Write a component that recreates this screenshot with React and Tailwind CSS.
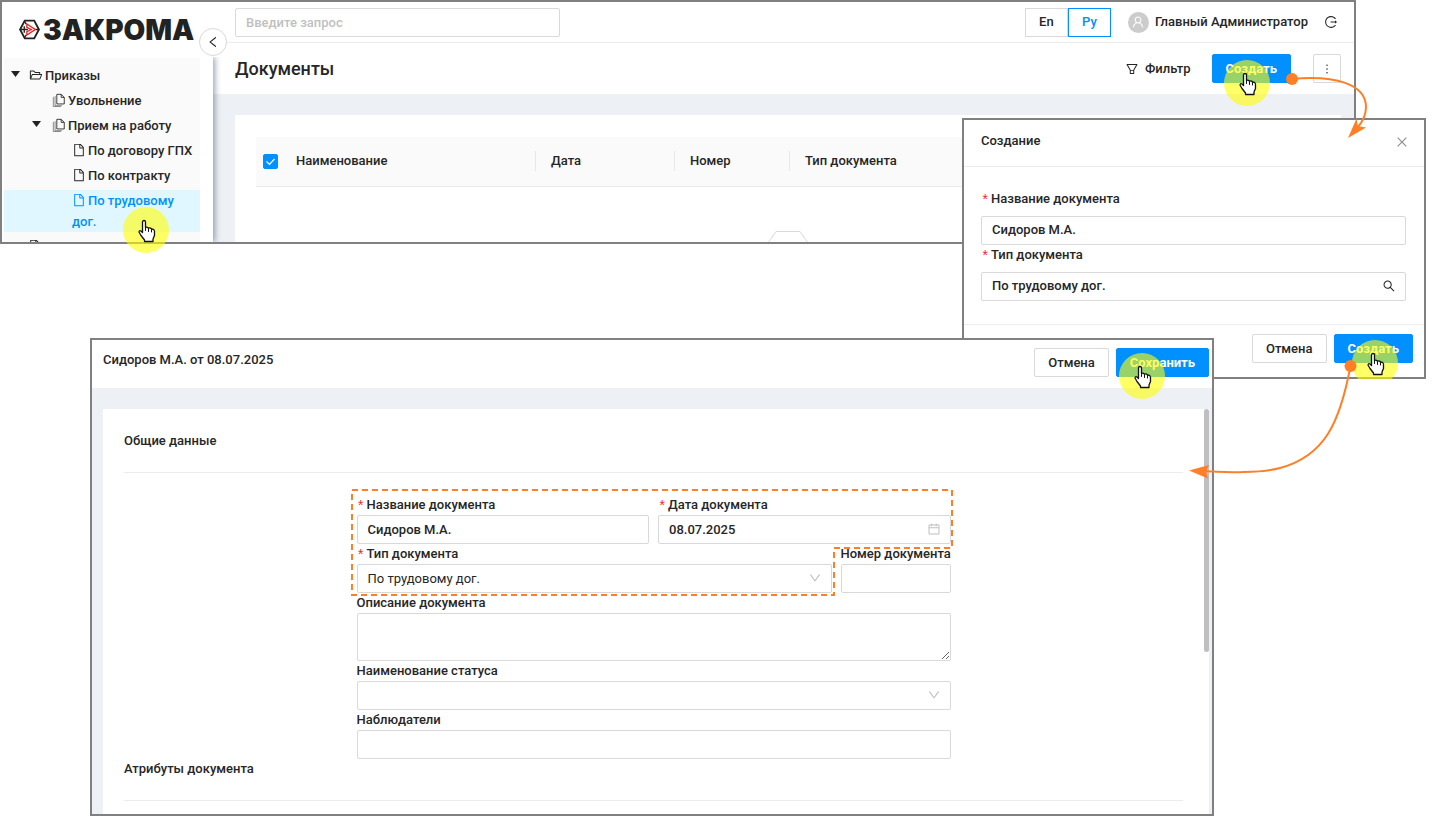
import { useState } from "react"
import {
  AiOutlineCalendar,
  AiOutlineClose,
  AiOutlineDown,
  AiOutlineFile,
  AiOutlineFilter,
  AiOutlineFolderOpen,
  AiOutlineLeft,
  AiOutlineLogout,
  AiOutlineMore,
  AiOutlineSearch,
  AiOutlineUser,
} from "react-icons/ai"
import clsx from "clsx"

const fieldClass =
  "block w-full h-[29px] px-[10px] bg-white border border-[#d9d9d9] rounded-xs placeholder-[#bfbfbf] focus:outline-none focus:border-[#0090ff]"

// stacked sheets, the front one with a folded corner
const CopiesIcon = ({ className }) => (
  <svg viewBox="0 0 14 16" fill="none" stroke="currentColor" className={className}>
    <path d="M4.500 1.500h5l3.500 3.500v7.500H4.500zM9.500 1.500V5H13" />
    <path d="M2.500 3.500v11H10.500M.5 4.500v11H9" strokeOpacity="0.6" />
  </svg>
)

const LogoMark = () => (
  <svg viewBox="0 0 20 20" fill="none" className="w-[21px] h-[21px] shrink-0">
    <path d="M5.500 1.500h9L19 10l-4.500 8.500h-9L1 10z" stroke="#222" strokeWidth="1.800" />
    <path d="M5.500 2.500L7 5M5.500 17.500L7 15M1 10h7.500M5 7v6M16 10h3" stroke="#222" strokeWidth="1.300" />
    <path d="M7.500 4.800l8 5.200-8 5.200v-3.200l4-2-4-2z" stroke="#f01c1c" strokeWidth="1.300" />
  </svg>
)

const Cursor = ({ className }) => (
  <svg width="46" height="46" className={clsx("absolute pointer-events-none overflow-hidden", className)}>
    <circle cx="23" cy="23" r="23" fill="#ffff00" fillOpacity="0.6" />
    <g transform="translate(15 13)" stroke="#111" strokeLinejoin="round" strokeLinecap="round">
      <path
        d="M4.500 2a1.500 1.500 0 0 1 3 0v5.500q1.500-1 3 .7 1.800-.8 3 .8 2.600-.2 3 2v4.500l-1.500 3.500v2.500H6.500V20L3 15.500 1 12q.3-2 2-1l1.500 1.500z"
        fill="#fff"
        strokeWidth="1.300"
      />
      <path d="M7.500 7.500v3M10.500 8.500v3M13.500 9.500v2.500" fill="none" />
    </g>
  </svg>
)

const Button = ({ primary, children }) => (
  <button
    type="button"
    className={clsx(
      "h-[29px] px-[13px] border rounded-xs",
      primary ? "bg-[#0090ff] border-[#0090ff] text-white font-bold" : "bg-white border-[#d9d9d9]"
    )}
  >
    {children}
  </button>
)

const Label = ({ htmlFor, required, children }) => (
  <label htmlFor={htmlFor} className="flex h-5 leading-5 whitespace-nowrap">
    {required && (
      <span className="w-[10px] text-[14px] leading-[24px] font-['Liberation_Mono'] text-[#f5222d]">*</span>
    )}
    {children}
  </label>
)

const tree = [
  { title: "Приказы", level: 0, icon: "folder", open: true },
  { title: "Увольнение", level: 1, icon: "copies" },
  { title: "Прием на работу", level: 1, icon: "copies", open: true },
  { title: "По договору ГПХ", level: 2, icon: "file" },
  { title: "По контракту", level: 2, icon: "file" },
  { title: "По трудовому дог.", level: 2, icon: "file" },
]

const indents = ["pl-[25px]", "pl-[48px]", "pl-[68px]"]
const carets = ["left-[7px]", "left-[28px]"]

const TreeIcon = ({ name }) => {
  const cls = "inline-block w-[14px] h-[14px] mr-[2px] align-[-2px]"
  if (name === "folder") return <AiOutlineFolderOpen className={cls} />
  if (name === "copies") return <CopiesIcon className={cls} />
  return <AiOutlineFile className={cls} />
}

const Sidebar = () => {
  const [selected, setSelected] = useState("По трудовому дог.")

  return (
    <aside className="relative z-10 w-[211px] shrink-0 flex flex-col">
      <div className="h-[55px] pl-[17px] flex items-center gap-[3px]">
        <LogoMark />
        <span className="font-['Inter'] font-black text-[28px] leading-none text-[#222]">ЗАКРОМА</span>
      </div>
      <div className="flex-1 min-h-0 pt-px pl-[2px] pr-[13px] bg-white shadow-[2px_0_6px_rgba(0,30,60,0.4)] [clip-path:inset(0_-10px_0_0)]">
        <ul className="h-full pt-[7px] flex flex-col gap-[4px] bg-[#fafafa]">
          {tree.map((item) => (
            <li key={item.title} className="relative">
              {item.open && (
                <svg viewBox="0 0 9 6" className={clsx("absolute top-[6px] w-[9px] h-[6px]", carets[item.level])}>
                  <path d="M0 0h9L4.500 6z" fill="#222" />
                </svg>
              )}
              <a
                href="#"
                onClick={(e) => {
                  e.preventDefault()
                  setSelected(item.title)
                }}
                className={clsx(
                  "block pr-5 leading-[21px]",
                  indents[item.level],
                  item.title.length < 17 && "whitespace-nowrap",
                  item.title === selected && "bg-[#e0f7ff] text-[#0090ff]"
                )}
              >
                <TreeIcon name={item.icon} />
                {item.title}
              </a>
            </li>
          ))}
          <li>
            <a href="#" aria-label="Договоры" className="block pl-[24px] leading-[21px]">
              <TreeIcon name="file" />
            </a>
          </li>
        </ul>
      </div>
      <button
        type="button"
        aria-label="Свернуть меню"
        className="absolute top-[26px] -right-[14px] w-[28px] h-[28px] flex items-center justify-center rounded-full bg-white border border-[#d9d9d9]"
      >
        <AiOutlineLeft className="w-[14px] h-[14px]" />
      </button>
    </aside>
  )
}

const DocumentsWindow = () => {
  const [lang, setLang] = useState("Ру")

  return (
    <section className="isolate absolute top-0 left-0 right-[79px] h-[244px] flex overflow-hidden bg-white border-2 border-[#808080]">
      <Sidebar />
      <div className="flex-1 min-w-0 flex flex-col">
        <header className="h-[41px] shrink-0 pl-[22px] pr-[16px] flex items-center border-b border-[#ececec]">
          <input
            type="search"
            aria-label="Поиск"
            placeholder="Введите запрос"
            className={clsx(fieldClass, "max-w-[325px]")}
          />
          <div className="ml-auto flex">
            {["En", "Ру"].map((item) => (
              <button
                key={item}
                type="button"
                onClick={() => setLang(item)}
                className={clsx(
                  "w-[43px] h-[29px] border",
                  item === lang ? "border-[#0090ff] text-[#0090ff]" : "border-[#d9d9d9]"
                )}
              >
                {item}
              </button>
            ))}
          </div>
          <span className="ml-[17px] w-[21px] h-[21px] shrink-0 flex items-center justify-center rounded-full bg-[#ccc] text-white">
            <AiOutlineUser className="w-[14px] h-[14px]" />
          </span>
          <span className="ml-[6px] whitespace-nowrap">Главный Администратор</span>
          <button type="button" aria-label="Выйти" className="ml-[16px]">
            <AiOutlineLogout className="w-[14px] h-[14px]" />
          </button>
        </header>

        <div className="h-[51px] shrink-0 pl-[22px] pr-[13px] flex items-center">
          <h1 className="mr-auto text-[18px]">Документы</h1>
          <button type="button" className="mr-[21px] flex items-center gap-[6px]">
            <AiOutlineFilter className="w-[14px] h-[14px]" />
            Фильтр
          </button>
          <Button primary>Создать</Button>
          <button
            type="button"
            aria-label="Ещё"
            className="ml-[22px] w-[28px] h-[29px] flex items-center justify-center border border-[#d9d9d9] rounded-xs"
          >
            <AiOutlineMore className="w-[14px] h-[14px]" />
          </button>
        </div>

        <main className="flex-1 min-h-0 pt-[21px] pl-[22px] pr-[13px] bg-[#edf1f5]">
          <div className="h-full pt-[22px] px-[21px] bg-white">
            <table className="w-full table-fixed text-left">
              <colgroup>
                <col className="w-[24px]" />
                <col className="w-[255px]" />
                <col className="w-[139px]" />
                <col className="w-[115px]" />
                <col />
              </colgroup>
              <thead>
                <tr className="h-[49px] bg-[#fafafa] border-b border-[#ececec]">
                  <th>
                    <span className="relative ml-[7px] block w-[15px] h-[15px]">
                      <input
                        type="checkbox"
                        defaultChecked
                        aria-label="Выбрать все"
                        className="peer block w-[15px] h-[15px] appearance-none rounded-xs border border-[#d9d9d9] checked:bg-[#0090ff] checked:border-[#0090ff]"
                      />
                      <svg
                        viewBox="0 0 15 15"
                        className="absolute inset-0 pointer-events-none invisible peer-checked:visible"
                      >
                        <path d="M3.500 7.500l3 3L11.500 5" fill="none" stroke="#fff" strokeWidth="1.200" />
                      </svg>
                    </span>
                  </th>
                  {["Наименование", "Дата", "Номер", "Тип документа"].map((title, i) => (
                    <th key={title} className="font-medium">
                      <span
                        className={clsx(
                          "block pl-[15px] border-l leading-[20px]",
                          i === 0 ? "border-transparent" : "border-[#e8e8e8]"
                        )}
                      >
                        {title}
                      </span>
                    </th>
                  ))}
                </tr>
              </thead>
            </table>
            <svg width="42" height="26" className="mx-auto mt-[43px]" fill="none" stroke="#d9d9d9">
              <path d="M1 13L9 1.500h24L41 13v12H1zM1 13h40" />
            </svg>
          </div>
        </main>
      </div>
    </section>
  )
}

const CreateDialog = () => (
  <section className="absolute top-[118px] right-[9px] w-[464px] bg-white border-2 border-[#808080]">
    <header className="h-[47px] pl-[17px] pr-[15px] pb-[2px] flex items-center border-b border-[#ececec]">
      <h2 className="mr-auto pb-[2px]">Создание</h2>
      <button type="button" aria-label="Закрыть" className="text-[#8c8c8c]">
        <AiOutlineClose className="w-[14px] h-[14px]" />
      </button>
    </header>
    <div className="pt-[22px] pb-[23px] pl-[17px] pr-[18px]">
      <Label htmlFor="new-name" required>Название документа</Label>
      <input
        id="new-name"
        type="text"
        defaultValue="Сидоров М.А."
        className={clsx(fieldClass, "mt-[7px] pb-[2px]")}
      />
      <Label htmlFor="new-type" required>Тип документа</Label>
      <div className="relative mt-[7px]">
        <input
          id="new-type"
          type="text"
          defaultValue="По трудовому дог."
          className={clsx(fieldClass, "pb-[2px]")}
        />
        <AiOutlineSearch className="absolute top-[7px] right-[10px] w-[14px] h-[14px]" />
      </div>
    </div>
    <footer className="pt-[9px] pb-[14px] pr-[11px] flex justify-end gap-[7px] border-t border-[#ececec]">
      <Button>Отмена</Button>
      <Button primary>Создать</Button>
    </footer>
  </section>
)

const SectionTitle = ({ children }) => (
  <h3 className="pb-[21px] leading-5 border-b border-[#ececec]">{children}</h3>
)

const DocumentWindow = () => (
  <section className="absolute top-[338px] left-[90px] right-[221px] bg-[#edf1f5] border-2 border-[#808080]">
    <header className="h-[48px] pt-[8px] pl-[11px] pr-[3px] flex gap-[7px] bg-white">
      <h2 className="mr-auto pt-px leading-[22px]">Сидоров М.А. от 08.07.2025</h2>
      <Button>Отмена</Button>
      <Button primary>Сохранить</Button>
    </header>
    <div className="relative mt-[21px] ml-[11px] mr-[3px] pt-[22px] pb-[13px] pl-[21px] pr-[26px] bg-white">
      <SectionTitle>Общие данные</SectionTitle>
      <form className="relative mt-[22px] mx-auto max-w-[594px]">
        <div className="grid grid-cols-2 gap-[9px]">
          <div>
            <Label htmlFor="name" required>Название документа</Label>
            <input id="name" type="text" defaultValue="Сидоров М.А." className={fieldClass} />
          </div>
          <div>
            <Label htmlFor="date" required>Дата документа</Label>
            <div className="relative">
              <input id="date" type="text" defaultValue="08.07.2025" className={fieldClass} />
              <AiOutlineCalendar className="absolute top-[7px] right-[10px] w-[14px] h-[14px] text-[#bfbfbf]" />
            </div>
          </div>
        </div>
        <div className="flex gap-[9px]">
          <div className="flex-1">
            <Label htmlFor="type" required>Тип документа</Label>
            <div className="relative">
              <select id="type" className={clsx(fieldClass, "appearance-none font-normal")}>
                <option>По трудовому дог.</option>
                <option>По контракту</option>
              </select>
              <AiOutlineDown className="absolute top-[7px] right-[10px] w-[14px] h-[14px] pointer-events-none text-[#bfbfbf]" />
            </div>
          </div>
          <div className="w-[110px]">
            <Label htmlFor="number">Номер документа</Label>
            <input id="number" type="text" className={fieldClass} />
          </div>
        </div>
        <Label htmlFor="description">Описание документа</Label>
        <textarea
          id="description"
          className="block w-full h-[48px] px-[10px] py-1 border border-[#d9d9d9] rounded-xs focus:outline-none"
        />
        <Label htmlFor="status">Наименование статуса</Label>
        <div className="relative">
          <select id="status" className={clsx(fieldClass, "appearance-none")}>
            <option></option>
          </select>
          <AiOutlineDown className="absolute top-[7px] right-[10px] w-[14px] h-[14px] pointer-events-none text-[#bfbfbf]" />
        </div>
        <Label htmlFor="watchers">Наблюдатели</Label>
        <input id="watchers" type="text" className={fieldClass} />

        {/* outline round the fields that are filled in automatically */}
        <svg
          width="604"
          height="110"
          fill="none"
          stroke="#ff7f27"
          strokeWidth="2"
          strokeDasharray="6 4"
          className="absolute -top-[6px] -left-[6px] pointer-events-none"
        >
          <path d="M1 1h600v58H483v47H1z" />
        </svg>
      </form>
      <SectionTitle>Атрибуты документа</SectionTitle>
      <div className="absolute top-0 right-0 w-[5px] h-[243px] rounded-full bg-[#bfbfbf]" />
    </div>
  </section>
)

const Arrows = () => (
  <>
    <svg
      viewBox="1284 70 86 70"
      className="absolute top-[70px] right-[65px] w-[86px] h-[70px] pointer-events-none"
    >
      <path
        d="M1292 79C1335 75 1366 84 1366 107c0 7-3 14-8 20"
        fill="none"
        stroke="#ff7f27"
        strokeWidth="2"
      />
      <circle cx="1292" cy="79" r="6" fill="#ff7f27" />
      <path d="M1348 138l8.500-19.500 1.500 7.500 8 1.500z" fill="#ff7f27" />
    </svg>
    <svg
      viewBox="1186 356 174 126"
      className="absolute top-[356px] right-[75px] w-[174px] h-[126px] pointer-events-none"
    >
      <path
        d="M1350.500 366C1340 422 1325 456 1280 468 1258 474 1225 472 1204 471"
        fill="none"
        stroke="#ff7f27"
        strokeWidth="2"
      />
      <circle cx="1350.500" cy="366" r="6" fill="#ff7f27" />
      <path d="M1189 470.500l20-5.500-3 6.500 2 7z" fill="#ff7f27" />
    </svg>
  </>
)

const App = () => {
  return (
    <div className="relative min-h-screen overflow-hidden bg-white font-['Roboto',sans-serif] text-[13px] font-medium text-[#262626]">
      <DocumentsWindow />
      <CreateDialog />
      <DocumentWindow />
      <Cursor className="top-[207px] left-[123px]" />
      <Cursor className="top-[60px] right-[165px]" />
      <Cursor className="top-[340px] right-[37px] h-[39px]" />
      <Cursor className="top-[353px] right-[270px]" />
      <Arrows />
    </div>
  )
}

export default App
